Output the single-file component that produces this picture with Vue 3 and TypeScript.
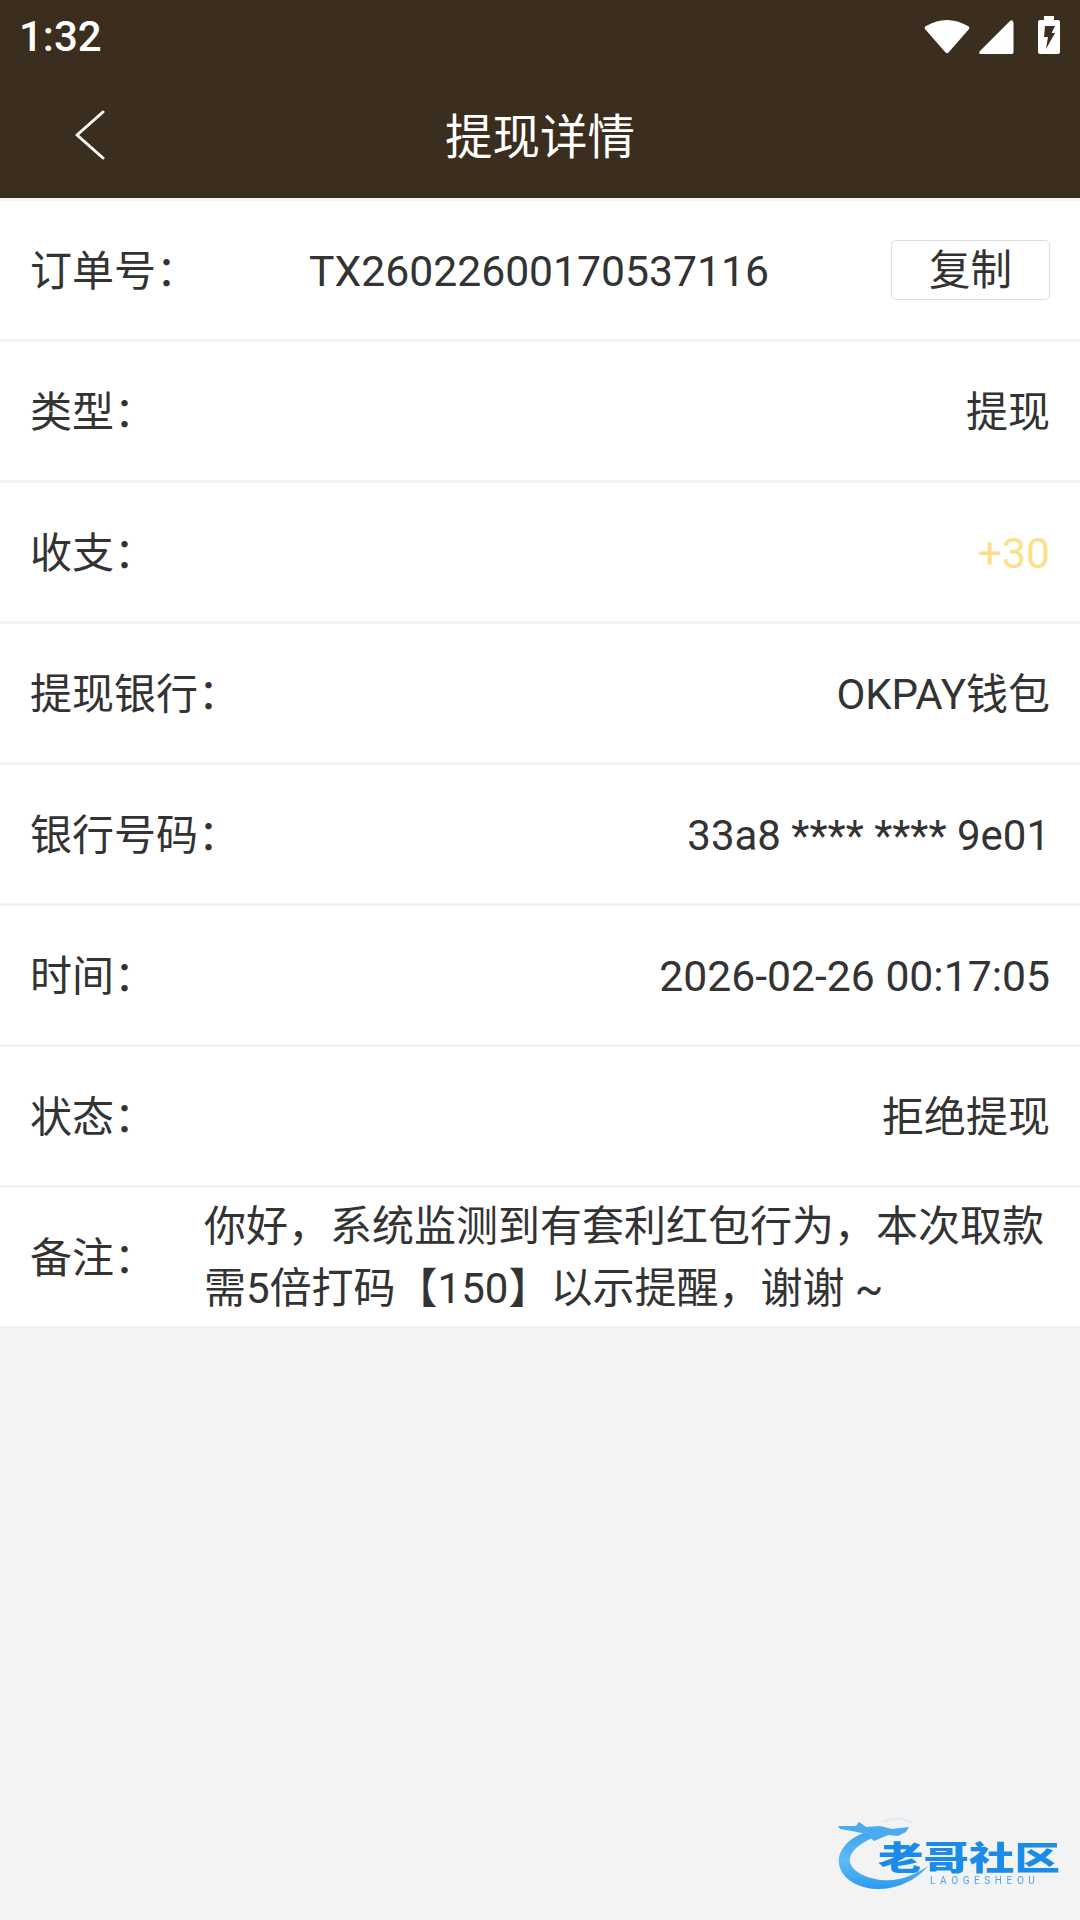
<script setup lang="ts">
interface DetailRow {
  label: string;
  value: string;
  accent?: boolean;
  wide?: boolean;
}

const rows: DetailRow[] = [
  { label: '类型：', value: '提现' },
  { label: '收支：', value: '+30', accent: true, wide: true },
  { label: '提现银行：', value: 'OKPAY钱包' },
  { label: '银行号码：', value: '33a8 **** **** 9e01' },
  { label: '时间：', value: '2026-02-26 00:17:05', wide: true },
  { label: '状态：', value: '拒绝提现' },
];
</script>

<template>
  <div class="page">
    <header class="top">
      <div class="status">
        <span class="clock">1:32</span>
        <div class="status-icons">
          <svg width="46" height="37" viewBox="0 0 46 37">
            <path d="M1 12 Q0 10 2 9 Q23 -3 44 9 Q46 10 45 12 L24.5 35.5 Q23 37 21.5 35.5 Z" fill="#fff" />
          </svg>
          <svg class="signal" width="35" height="34" viewBox="0 0 35 34">
            <path d="M1 31 L31 1 Q34 -1 34.5 3 L34.5 32 Q34.5 34 33 34 L2 34 Q-1 34 1 31 Z" fill="#fff" />
          </svg>
          <svg width="22" height="38" viewBox="0 0 22 38">
            <path d="M6 0 H16 V4 H20 Q22 4 22 6 V36 Q22 38 20 38 H2 Q0 38 0 36 V6 Q0 4 2 4 H6 Z" fill="#fff" />
            <path d="M7 10 H17 L13.5 17 H17 L8 33 L10 21 H6 Z" fill="#3c2e1e" />
          </svg>
        </div>
      </div>
      <div class="nav">
        <svg class="back" width="32" height="50" viewBox="0 0 32 50">
          <path d="M29 2 L3 25 L29 48" fill="none" stroke="#fff" stroke-width="3" stroke-linecap="round" stroke-linejoin="round" />
        </svg>
        <h1 class="title">提现详情</h1>
      </div>
    </header>

    <section class="list">
      <div class="row">
        <span class="label">订单号：</span>
        <span class="order-no">TX26022600170537116</span>
        <button class="copy" type="button">复制</button>
      </div>
      <div v-for="row in rows" :key="row.label" class="row">
        <span class="label">{{ row.label }}</span>
        <span class="value" :class="{ accent: row.accent, wide: row.wide }">{{ row.value }}</span>
      </div>
      <div class="row note">
        <span class="label note-label">备注：</span>
        <p class="note-text">你好，系统监测到有套利红包行为，本次取款需5倍打码【150】以示提醒，谢谢 ~</p>
      </div>
    </section>

    <div class="logo">
      <svg class="logo-mark" width="226" height="76" viewBox="0 0 226 76">
        <defs>
          <linearGradient id="swirl" x1="0" y1="0" x2="0" y2="1">
            <stop offset="0" stop-color="#3fa4f0" />
            <stop offset="0.5" stop-color="#5fbaf6" />
            <stop offset="1" stop-color="#2a9af0" />
          </linearGradient>
        </defs>
        <path d="M29 16 C8 22 -3 38 2 52 C8 68 30 76 52 72 C68 69 82 60 90 50 C78 58 62 66 44 64 C24 62 10 52 12 42 C14 32 26 26 36 21 Z" fill="url(#swirl)" />
        <path d="M0 10 L18 10 L21 6 L28 11 L42 10 L54 13 L71 11 L68 16 L60 20 L50 19 L36 25 L28 18 L14 15 L2 13 Z" fill="#4aabf0" />
        <path d="M45 6 C55 1 68 2 73 7" fill="none" stroke="#dcebf7" stroke-width="2" />
      </svg>
      <span class="logo-name">老哥社区</span>
      <span class="logo-sub">LAOGESHEOU</span>
    </div>
  </div>
</template>

<style>
html,
body {
  margin: 0;
  background: #f3f3f3;
}
</style>

<style scoped>
.page {
  position: relative;
  width: 1080px;
  height: 1920px;
  background: #f3f3f3;
  font-family: Roboto, "Noto Sans CJK SC", sans-serif;
  color: #333;
  overflow: hidden;
}

.top {
  height: 198px;
  background: #3c2e1e;
  color: #fff;
}

.status {
  height: 72px;
  display: flex;
  align-items: center;
  justify-content: space-between;
  padding: 0 20px 0 19px;
}

.clock {
  font-size: 42px;
  font-weight: 500;
}

.status-icons {
  display: flex;
  align-items: flex-end;
  height: 38px;
  margin-bottom: 3px;
}

.signal {
  margin: 0 24px 0 9px;
}

.nav {
  position: relative;
  box-sizing: border-box;
  height: 126px;
  padding-top: 7px;
  display: flex;
  align-items: center;
  justify-content: center;
}

.back {
  position: absolute;
  left: 74px;
  top: 38px;
}

.title {
  margin: 0;
  font-size: 47.5px;
  line-height: 1;
  font-weight: 400;
}

.row {
  box-sizing: border-box;
  height: 138px;
  margin-top: 3px;
  padding: 3px 30px 0;
  display: flex;
  align-items: center;
  justify-content: space-between;
  background: #fff;
  font-size: 42px;
  line-height: 1;
}

.value.accent {
  color: #fbdf8a;
}

.value.wide {
  font-size: 42.7px;
}

.order-no {
  flex: 1;
  padding-right: 11px;
  text-align: center;
  font-size: 42.7px;
}

.copy {
  width: 159px;
  height: 60px;
  margin-top: -3px;
  padding: 2px 0 0;
  border: 1px solid #ddd;
  border-radius: 5px;
  background: #fff;
  color: #333;
  font: inherit;
  font-size: 41.5px;
}

.note {
  justify-content: flex-start;
}

.note-label {
  width: 174px;
  flex-shrink: 0;
}

.note-text {
  margin: -2px 0 0;
  width: 846px;
  font-size: 42px;
  line-height: 62px;
}

.logo {
  position: absolute;
  left: 838px;
  top: 1816px;
  width: 226px;
  height: 76px;
  filter: blur(0.7px);
}

.logo-mark {
  position: absolute;
  left: 0;
  top: 0;
}

.logo-name {
  position: absolute;
  left: 40px;
  top: 29px;
  font-size: 45.5px;
  line-height: 28px;
  font-weight: 900;
  color: #1a8be8;
  white-space: nowrap;
  transform: scaleY(0.72);
}

.logo-sub {
  position: absolute;
  left: 92px;
  top: 60px;
  font-size: 10px;
  line-height: 10px;
  letter-spacing: 4.6px;
  color: #4fa6ea;
  white-space: nowrap;
}
</style>
